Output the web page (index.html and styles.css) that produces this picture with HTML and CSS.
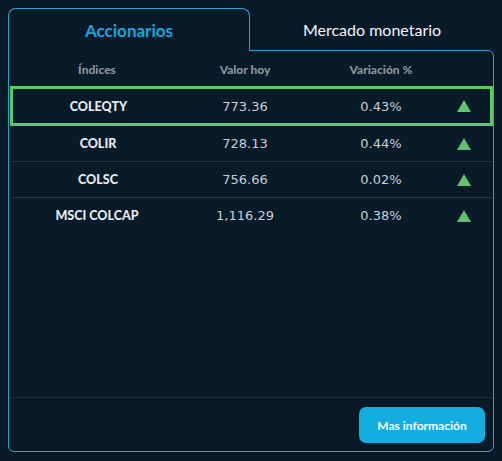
FILE: index.html
```html
<!DOCTYPE html>
<html lang="es">
<head>
<meta charset="utf-8">
<title>Índices</title>
<link rel="stylesheet" href="styles.css">
</head>
<body>
<div class="panel">
  <div class="tabs">
    <div class="tab tab-active">Accionarios</div>
    <div class="tab tab-inactive">Mercado monetario</div>
  </div>
  <div class="card">
    <div class="table">
      <div class="row row-head">
        <div class="cell">Índices</div>
        <div class="cell">Valor hoy</div>
        <div class="cell">Variación %</div>
        <div class="cell"></div>
      </div>
      <div class="row row-data row-selected">
        <div class="cell name">COLEQTY</div>
        <div class="cell num">773.36</div>
        <div class="cell num">0.43%</div>
        <div class="cell arrow"><span class="up"></span></div>
      </div>
      <div class="row row-data row-sep">
        <div class="cell name">COLIR</div>
        <div class="cell num">728.13</div>
        <div class="cell num">0.44%</div>
        <div class="cell arrow"><span class="up"></span></div>
      </div>
      <div class="row row-data row-sep">
        <div class="cell name">COLSC</div>
        <div class="cell num">756.66</div>
        <div class="cell num">0.02%</div>
        <div class="cell arrow"><span class="up"></span></div>
      </div>
      <div class="row row-data">
        <div class="cell name">MSCI COLCAP</div>
        <div class="cell num">1,116.29</div>
        <div class="cell num">0.38%</div>
        <div class="cell arrow"><span class="up"></span></div>
      </div>
    </div>
    <div class="footer">
      <button class="btn">Mas información</button>
    </div>
  </div>
</div>
</body>
</html>
```

FILE: styles.css
```css
* { box-sizing: border-box; }

html, body {
  margin: 0;
  background: #091a29;
}

body {
  padding: 8px;
  font-family: "Lato", "Liberation Sans", sans-serif;
}

.panel {
  width: 486px;
  height: 444px;
  display: flex;
  flex-direction: column;
}

.tabs {
  display: flex;
  height: 43px;
  margin-bottom: -1px;
  position: relative;
  z-index: 1;
}

.tab {
  display: flex;
  align-items: center;
  justify-content: center;
  font-size: 16px;
}

.tab-active {
  width: 242px;
  border: 1px solid #2fa4cc;
  border-bottom: none;
  border-radius: 8px 8px 0 0;
  background: #091a29;
  color: #17a7dc;
  font-weight: 700;
  font-size: 17px;
  padding-top: 1px;
}

.tab-inactive {
  flex: 1;
  color: #f2f4f6;
  font-weight: 400;
  padding-bottom: 1px;
}

.card {
  flex: 1;
  border: 1px solid #2fa4cc;
  border-radius: 0 6px 6px 6px;
  display: flex;
  flex-direction: column;
  padding: 0 0 0 1px;
}

.table {
  display: flex;
  flex-direction: column;
}

.row {
  display: grid;
  grid-template-columns: 174px 122px 150px 1fr;
  align-items: center;
}

.cell {
  text-align: center;
}

.row-head {
  height: 35px;
  color: #8a949d;
  font-weight: 900;
  font-size: 12px;
  padding-top: 1px;
}

.row-data {
  height: 35px;
}

.row-selected {
  height: 40px;
  border: 3px solid #5fc86b;
  grid-template-columns: 171px 122px 150px 1fr;
}

.row-sep {
  height: 36px;
  border-bottom: 1px solid #24384a;
  margin: 0 2px;
  grid-template-columns: 172px 122px 150px 1fr;
}

.name {
  color: #e6eaed;
  font-weight: 900;
  font-size: 12.5px;
}

.num {
  font-family: "DejaVu Sans", "Verdana", sans-serif;
  color: #c9ced3;
  font-size: 13px;
}

.arrow {
  display: flex;
  align-items: center;
}

.up {
  display: block;
  width: 0;
  height: 0;
  margin-left: 1px;
  border-left: 7px solid transparent;
  border-right: 7px solid transparent;
  border-bottom: 12px solid #5fc46b;
}

.footer {
  margin-top: auto;
  border-top: 1px solid #1c2f3e;
  display: flex;
  justify-content: flex-end;
  padding: 9px 8px 8px 0;
}

.btn {
  width: 126px;
  height: 36px;
  border: none;
  border-radius: 7px;
  background: #13ade0;
  color: #ffffff;
  font-family: "Lato", "Liberation Sans", sans-serif;
  font-weight: 700;
  font-size: 12px;
}
```
